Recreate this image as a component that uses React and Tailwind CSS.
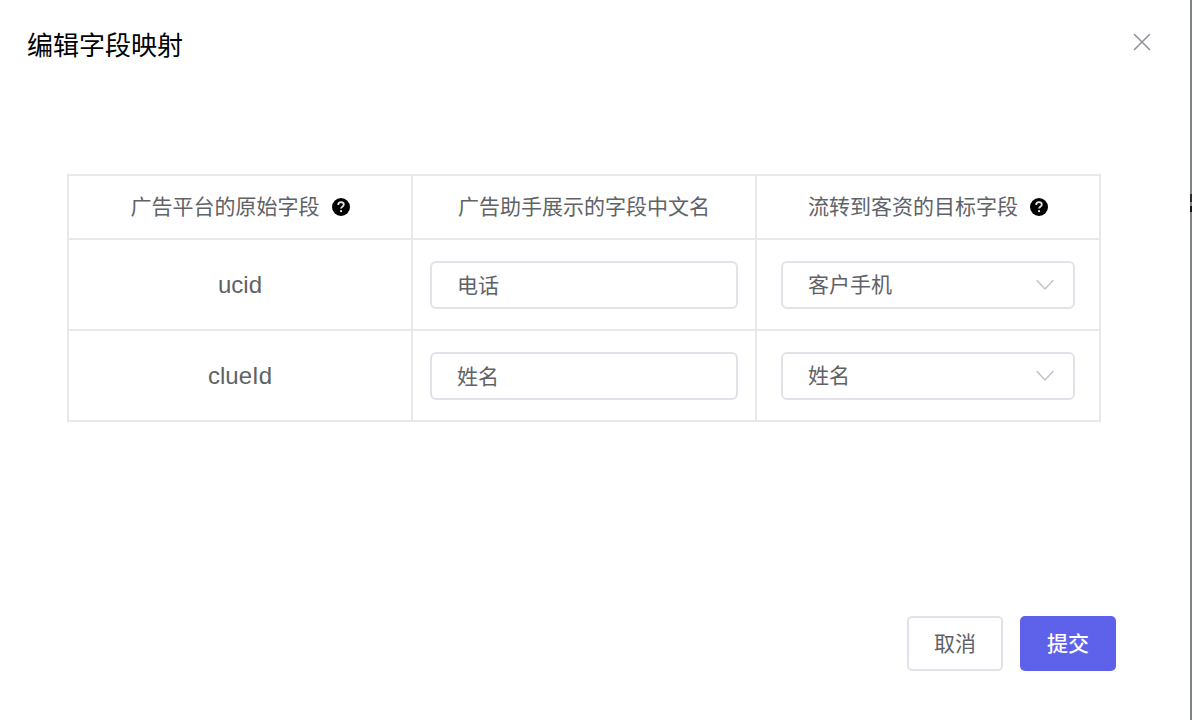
const fields = [
  { key: "ucid", label: "电话", target: "客户手机" },
  { key: "clueId", label: "姓名", target: "姓名" },
];

const targets = ["客户手机", "姓名"];

function HelpIcon() {
  return (
    <svg viewBox="0 0 18 18" className="ml-3 h-[18px] w-[18px]" aria-hidden="true">
      <circle cx="9" cy="9" r="9" fill="#000" />
      <path
        d="M6.2 6.9C6.2 5.2 7.4 4.2 9 4.2s2.8.9 2.8 2.4c0 1.1-.7 1.6-1.5 2.2-.8.5-1.2.8-1.2 1.8"
        fill="none"
        stroke="#e6e6e6"
        strokeWidth="1.8"
      />
      <circle cx="9.1" cy="13.2" r="1.1" fill="#e6e6e6" />
    </svg>
  );
}

function HeaderCell({ children, help }) {
  return (
    <th scope="col" className="h-16 border-2 border-[#e8e8e8] p-0 font-normal">
      <div className="flex items-center justify-center">
        <span>{children}</span>
        {help && <HelpIcon />}
      </div>
    </th>
  );
}

/* Sliver of the dimmed page that shows beside the dialog. */
function Backdrop() {
  return (
    <div className="w-0.5 bg-[#828386] pt-[194px]" aria-hidden="true">
      <div className="h-2 bg-[#2b2b2b]" />
      <div className="mt-1 h-1.5 bg-[#151515]" />
    </div>
  );
}

export default function App() {
  return (
    <div className="flex min-h-screen bg-white font-['Liberation_Sans','Noto_Sans_CJK_SC',sans-serif] text-[21px] leading-[30px] text-[#606266]">
      <main className="flex flex-1 flex-col">
        <header className="flex items-start justify-between pt-[26px] pr-[38px] pl-[27px]">
          <h1 className="text-[26px] leading-10 text-black">编辑字段映射</h1>
          <button type="button" aria-label="关闭" className="mt-1.5 cursor-pointer">
            <svg viewBox="0 0 20 20" className="h-5 w-5" fill="none" stroke="#909399" strokeWidth="1.6" strokeLinecap="round">
              <path d="M2.5 2.5 17.5 17.5M17.5 2.5 2.5 17.5" />
            </svg>
          </button>
        </header>

        <form className="flex flex-1 flex-col" onSubmit={(e) => e.preventDefault()}>
          <div className="flex-1 pt-[108px] pr-[89px] pl-[67px]">
            <table className="w-full table-fixed border-collapse text-center">
              <thead>
                <tr>
                  <HeaderCell help>广告平台的原始字段</HeaderCell>
                  <HeaderCell>广告助手展示的字段中文名</HeaderCell>
                  <HeaderCell help>流转到客资的目标字段</HeaderCell>
                </tr>
              </thead>
              <tbody>
                {fields.map((f) => (
                  <tr key={f.key}>
                    <td className="h-[91px] border-2 border-[#e8e8e8] p-0 text-2xl">{f.key}</td>
                    <td className="border-2 border-[#e8e8e8] px-[17px] py-0">
                      <input
                        type="text"
                        aria-label={`${f.key} 字段中文名`}
                        defaultValue={f.label}
                        className="block h-12 w-full rounded-md border-2 border-[#e2e3ea] bg-white px-[25px] pt-0 pb-0.5 outline-none"
                      />
                    </td>
                    <td className="border-2 border-[#e8e8e8] px-6 py-0">
                      <div className="relative">
                        <select
                          aria-label={`${f.key} 目标字段`}
                          defaultValue={f.target}
                          className="block h-12 w-full appearance-none rounded-md border-2 border-[#e2e3ea] bg-white px-[25px] outline-none"
                        >
                          {targets.map((t) => (
                            <option key={t}>{t}</option>
                          ))}
                        </select>
                        <svg
                          viewBox="0 0 20 12"
                          className="pointer-events-none absolute top-[18px] right-5 h-3 w-5"
                          fill="none"
                          stroke="#c0c4cc"
                          strokeWidth="1.5"
                          strokeLinecap="round"
                          strokeLinejoin="round"
                          aria-hidden="true"
                        >
                          <path d="M2 1.5 10 10 18 1.5" />
                        </svg>
                      </div>
                    </td>
                  </tr>
                ))}
              </tbody>
            </table>
          </div>

          <footer className="flex justify-end gap-[17px] pr-[74px] pb-[49px]">
            <button type="button" className="h-[55px] w-24 cursor-pointer rounded-[5px] border-2 border-[#e2e3ea] bg-white">
              取消
            </button>
            <button type="submit" className="h-[55px] w-24 cursor-pointer rounded-[5px] bg-[#5e62eb] font-medium text-white">
              提交
            </button>
          </footer>
        </form>
      </main>
      <Backdrop />
    </div>
  );
}
